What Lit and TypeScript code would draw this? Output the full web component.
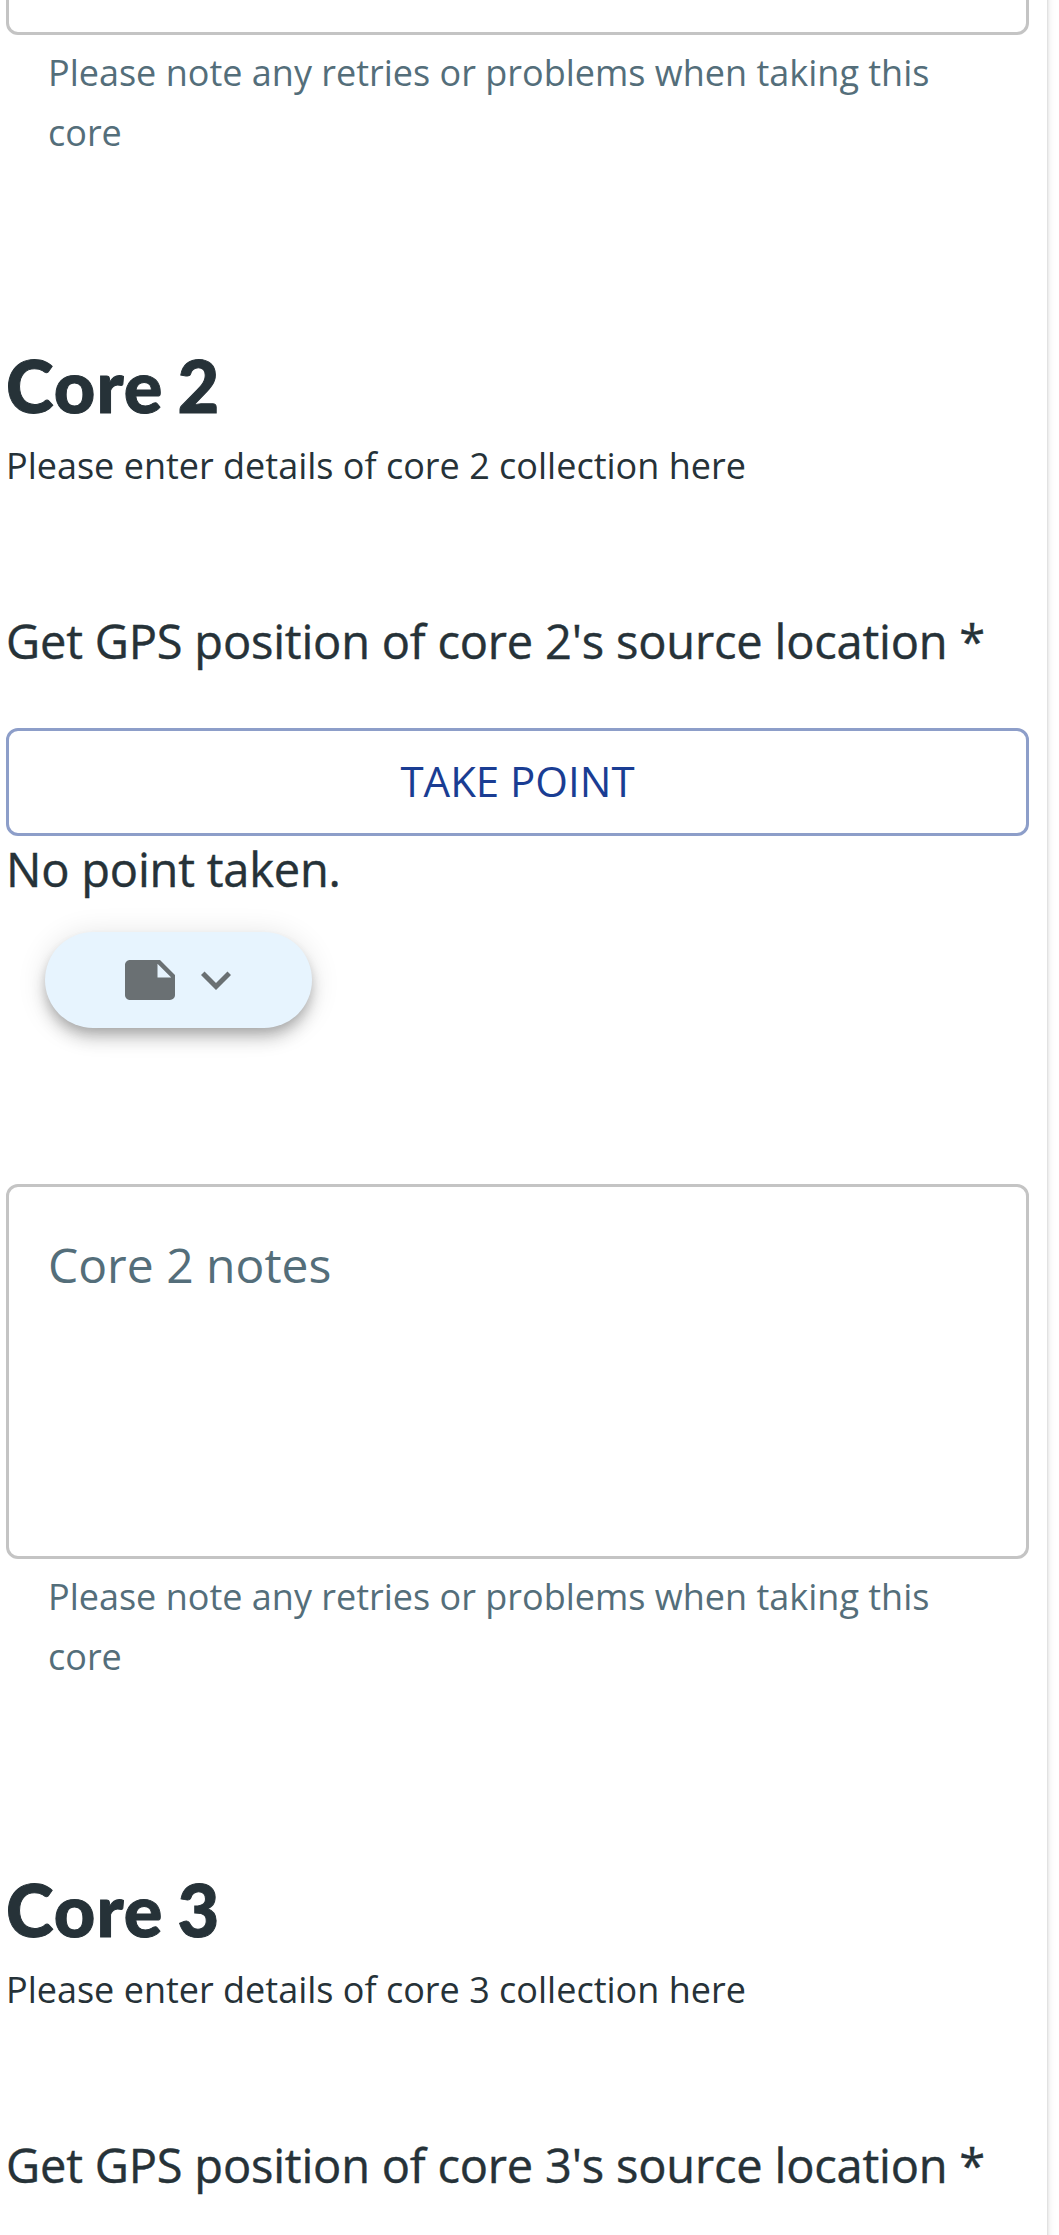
import { LitElement, html, css, nothing } from "lit";
import { customElement, property } from "lit/decorators.js";

@customElement("core-notes")
class CoreNotes extends LitElement {
  @property() label = "";
  static styles = css`
    :host { display: block; }
    .box {
      box-sizing: border-box;
      height: 375px;
      border: 3px solid #c4c4c4;
      border-radius: 12px;
      padding: 43px 39px 0;
      font-size: 48px;
      line-height: 69px;
      color: #546e7a;
    }
    .help {
      margin: 8px 42px 0;
      font-size: 36px;
      line-height: 60px;
      height: 120px;
      color: #546e7a;
    }
  `;
  render() {
    return html`
      <div class="box">${this.label}</div>
      <div class="help">Please note any retries or problems when taking this core</div>
    `;
  }
}

@customElement("core-section")
class CoreSection extends LitElement {
  @property({ type: Number }) number = 2;
  @property({ type: Boolean }) collapsed = false;
  static styles = css`
    :host { display: block; height: 1524px; }
    .title {
      font-family: Lato, sans-serif;
      font-weight: 900;
      font-size: 72px;
      line-height: 84px;
      letter-spacing: 1.1px;
      word-spacing: -4.2px;
      -webkit-text-stroke: 1px currentColor;
      margin: 0;
    }
    .desc { font-size: 36px; line-height: 54px; margin-top: 12px; }
    .ask, .state {
      font-size: 47px;
      letter-spacing: -0.2px;
      -webkit-text-stroke: 0.4px currentColor;
      white-space: nowrap;
    }
    .ask { line-height: 72px; margin-top: 112px; }
    .state { line-height: 66px; }
    .take {
      box-sizing: border-box;
      display: flex;
      align-items: center;
      justify-content: center;
      width: 100%;
      height: 108px;
      margin-top: 51px;
      padding: 0 0 4px;
      border: 3px solid #8d9ec9;
      border-radius: 12px;
      background: none;
      color: #1a3d93;
      font: inherit;
      font-size: 42px;
      line-height: 57px;
    }
    .pill {
      display: flex;
      align-items: center;
      box-sizing: border-box;
      gap: 6px;
      width: 267px;
      height: 96px;
      margin: 30px 0 0 39px;
      padding-left: 75px;
      border-radius: 48px;
      background: #e7f4fe;
      box-shadow: 0 6px 12px -3px rgba(0, 0, 0, 0.2), 0 12px 15px rgba(0, 0, 0, 0.14),
        0 3px 30px rgba(0, 0, 0, 0.12);
    }
    .pill svg { width: 60px; height: 60px; fill: #6a7073; }
    core-notes { margin-top: 156px; }
  `;
  private fields() {
    return html`
      <button class="take">TAKE POINT</button>
      <div class="state">No point taken.</div>
      <div class="pill">
        <svg viewBox="0 0 24 24"><path d="M22 10l-6-6H4c-1.1 0-2 .9-2 2v12.01c0 1.1.9 1.99 2 1.99l16-.01c1.1 0 2-.89 2-1.99v-8zm-7-4.5l5.5 5.5H15V5.5z"/></svg>
        <svg viewBox="0 0 24 24"><path d="M16.59 8.59L12 13.17 7.41 8.59 6 10l6 6 6-6z"/></svg>
      </div>
      <core-notes label="Core ${this.number} notes"></core-notes>
    `;
  }
  render() {
    return html`
      <h2 class="title">Core ${this.number}</h2>
      <div class="desc">Please enter details of core ${this.number} collection here</div>
      <div class="ask">Get GPS position of core ${this.number}'s source location *</div>
      ${this.collapsed ? nothing : this.fields()}
    `;
  }
}

@customElement("app-root")
class AppRoot extends LitElement {
  static styles = css`
    :host {
      display: flow-root;
      height: 2235px;
      overflow: hidden;
      background: #fff;
      color: #263238;
      font-family: "Open Sans", sans-serif;
    }
    .card {
      box-sizing: border-box;
      width: 1047px;
      height: 2275px;
      margin-top: -20px;
      padding: 20px 18px 0 6px;
      background: #fff;
      overflow: hidden;
      box-shadow: 0 0 3px rgba(0, 0, 0, 0.16), 0 0 9px rgba(0, 0, 0, 0.12);
    }
    .first { margin-top: -340px; height: 683px; }
  `;
  render() {
    return html`
      <div class="card">
        <core-notes class="first"></core-notes>
        <core-section .number=${2}></core-section>
        <core-section .number=${3} collapsed></core-section>
      </div>
    `;
  }
}
